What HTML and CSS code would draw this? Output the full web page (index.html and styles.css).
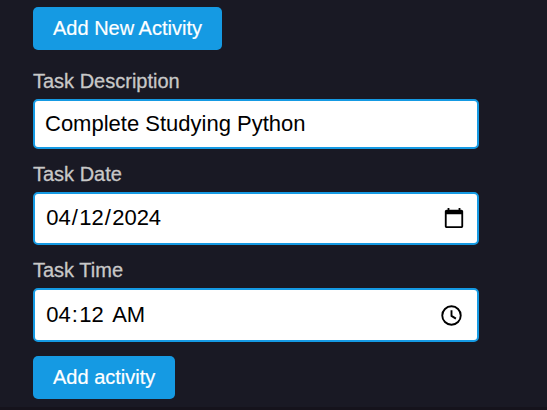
FILE: index.html
```html
<!DOCTYPE html>
<html lang="en">
<head>
<meta charset="utf-8">
<title>Activities</title>
<link rel="stylesheet" href="styles.css">
</head>
<body>
<main class="form">
  <button class="btn">Add New Activity</button>
  <div class="label">Task Description</div>
  <div class="field text">Complete Studying Python</div>
  <div class="label">Task Date</div>
  <div class="field date">
    <div class="parts"><span>04</span>/<span>12</span>/<span>2024</span></div>
    <svg class="calendar" viewBox="0 0 24 24"><path d="M20 3h-1V1h-2v2H7V1H5v2H4c-1.1 0-2 .9-2 2v16c0 1.1.9 2 2 2h16c1.1 0 2-.9 2-2V5c0-1.1-.9-2-2-2zm0 18H4V8h16v13z"/></svg>
  </div>
  <div class="label">Task Time</div>
  <div class="field time">
    <div class="parts"><span>04</span>:<span>12</span> <span>AM</span></div>
    <svg class="clock" viewBox="0 0 20 20"><circle cx="10" cy="10" r="8.8"/><path d="M10 5v5.4l4.2 2.6"/></svg>
  </div>
  <button class="btn">Add activity</button>
</main>
</body>
</html>
```
FILE: styles.css
```css
* { box-sizing: border-box; }
body {
  margin: 0;
  height: 410px;
  overflow: hidden;
  background: #191924;
  border-bottom: 3px solid #15131c;
  font-family: "Liberation Sans", Arial, sans-serif;
}
html { background: #191924; }
.form {
  display: flex;
  flex-direction: column;
  align-items: flex-start;
  width: 479px;
  padding: 7px 0 0 33px;
}
.btn {
  height: 43px;
  padding: 0 20px;
  border: 0;
  border-radius: 5px;
  background: #159ae3;
  color: #fff;
  font: 20px/43px "Liberation Sans", Arial, sans-serif;
  -webkit-text-stroke: 0.2px #fff;
}
.label {
  height: 24px;
  line-height: 24px;
  margin-top: 13px;
  margin-bottom: 6px;
  color: #c8c8c8;
  font-size: 20px;
  -webkit-text-stroke: 0.3px #c8c8c8;
}
.btn + .label { margin-top: 19px; }
.field {
  display: flex;
  align-items: center;
  justify-content: space-between;
  width: 446px;
  border: 2px solid #159ae3;
  border-radius: 5px;
  background: #fff;
  color: #000;
  font-size: 22px;
  padding: 0 12px 0 10px;
}
.text { height: 50px; }
.date { height: 53px; padding-bottom: 2px; }
.time { height: 54px; padding-right: 15px; }
.parts { white-space: pre; }
.parts span { padding: 0 1.2px; }
.calendar { width: 22px; height: 22px; fill: #000; }
.clock { width: 21px; height: 21px; fill: none; stroke: #000; stroke-width: 1.8; }
.time + .btn { margin-top: 14px; }
```
